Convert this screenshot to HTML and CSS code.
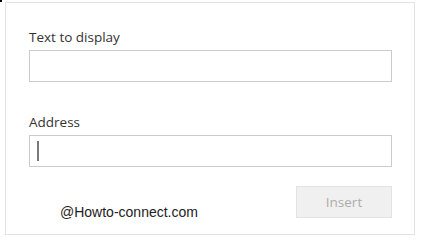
FILE: index.html
```html
<!DOCTYPE html>
<html>
<head>
<meta charset="utf-8">
<link rel="stylesheet" href="styles.css">
</head>
<body>
<div class="corner"></div>
<div class="panel">
  <div class="label">Text to display</div>
  <div class="field"></div>
  <div class="label label-second">Address</div>
  <div class="field field-active"><span class="caret"></span></div>
  <div class="actions">
    <div class="button">Insert</div>
  </div>
  <div class="watermark">@Howto-connect.com</div>
</div>
</body>
</html>
```
FILE: styles.css
```css
html, body {
  margin: 0;
  padding: 0;
  background: #ffffff;
}
body {
  width: 435px;
  height: 242px;
  position: relative;
  font-family: "Open Sans", "Noto Sans", sans-serif;
}
.corner {
  position: absolute;
  left: 0;
  top: 0;
  width: 2px;
  height: 2px;
  background: #000;
}
.panel {
  position: relative;
  margin: 2px 0 0 5px;
  width: 410px;
  height: 233px;
  box-sizing: border-box;
  border: 1px solid #e3e3e3;
  padding: 24px 22px 0 23px;
  display: flex;
  flex-direction: column;
}
.label {
  font-size: 13.5px;
  line-height: 20px;
  height: 20px;
  color: #333333;
}
.label-second {
  margin-top: 30px;
}
.field {
  margin-top: 3px;
  height: 32px;
  box-sizing: border-box;
  border: 1px solid #cccccc;
  background: #fff;
  display: flex;
  align-items: center;
  padding-left: 7px;
}
.caret {
  width: 2px;
  height: 20px;
  background: #7a7a7a;
}
.actions {
  margin-top: 19px;
  display: flex;
  justify-content: flex-end;
}
.button {
  width: 96px;
  height: 32px;
  box-sizing: border-box;
  border: 1px solid #e3e3e3;
  background: #f0f0f0;
  color: #acacac;
  font-size: 13.5px;
  display: flex;
  align-items: center;
  justify-content: center;
}
.watermark {
  position: absolute;
  left: 54px;
  top: 201px;
  font-family: "Liberation Sans", Arial, sans-serif;
  font-size: 14px;
  line-height: 16px;
  color: #222222;
}
```
